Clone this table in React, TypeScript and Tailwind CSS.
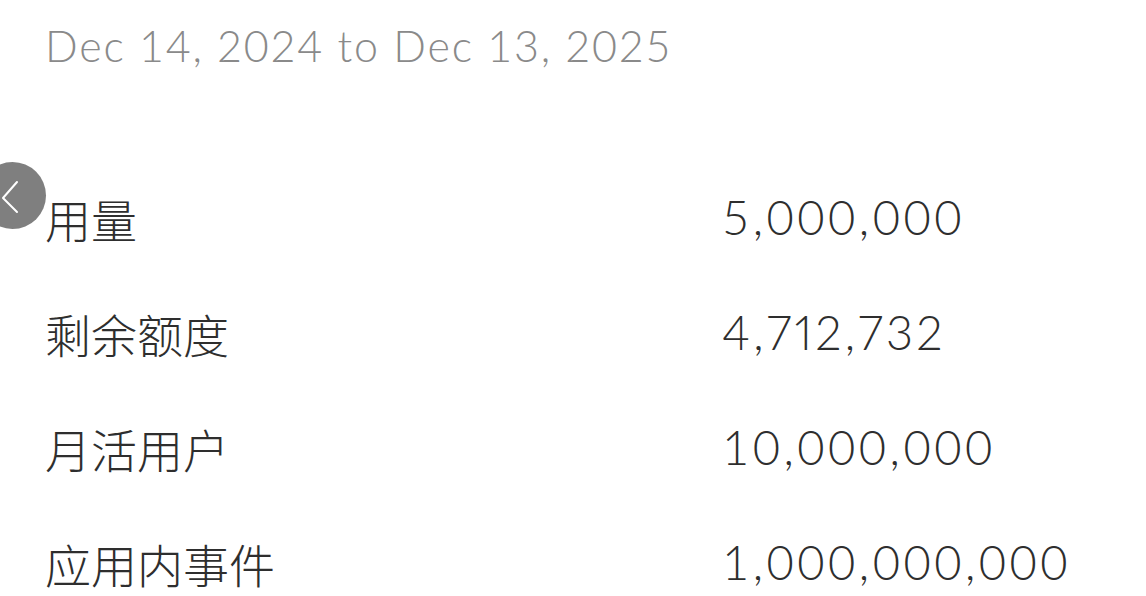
const rows = [
  { label: "用量", value: "5,000,000", pnum: false },
  { label: "剩余额度", value: "4,712,732", pnum: true },
  { label: "月活用户", value: "10,000,000", pnum: false },
  { label: "应用内事件", value: "1,000,000,000", pnum: false },
];

export default function App() {
  return (
    <div className="relative h-[596px] w-[1146px] overflow-hidden bg-white font-['Lato','Noto_Sans_CJK_SC',sans-serif]">
      <div className="h-[160px] pl-[45px] pt-[24px]">
        <p className="text-[43px] font-light leading-none tracking-[1.8px] text-[#8a8a8a]">
          Dec 14, 2024 to Dec 13, 2025
        </p>
      </div>

      <div className="pl-[45px]">
        {rows.map((r) => (
          <div key={r.label} className="grid h-[115px] grid-cols-[677px_1fr] items-center">
            <span className="font-['Noto_Sans_CJK_SC',sans-serif] text-[46px] font-light leading-none text-[#2e2e2e]">
              {r.label}
            </span>
            <span
              className={
                r.pnum
                  ? "text-[47px] font-light leading-none tracking-[3.2px] text-[#2e2e2e] proportional-nums"
                  : "text-[47px] font-light leading-none tracking-[3.5px] text-[#2e2e2e]"
              }
            >
              {r.value}
            </span>
          </div>
        ))}
      </div>

      <button className="absolute left-[-21px] top-[162px] grid h-[67px] w-[67px] place-items-center rounded-full bg-[#7f7f7f]">
        <svg width="67" height="67" viewBox="0 0 67 67" fill="none">
          <path d="M38 20 L24 36 L38 50" stroke="white" strokeWidth="2" strokeLinecap="round" strokeLinejoin="round" />
        </svg>
      </button>
    </div>
  );
}
